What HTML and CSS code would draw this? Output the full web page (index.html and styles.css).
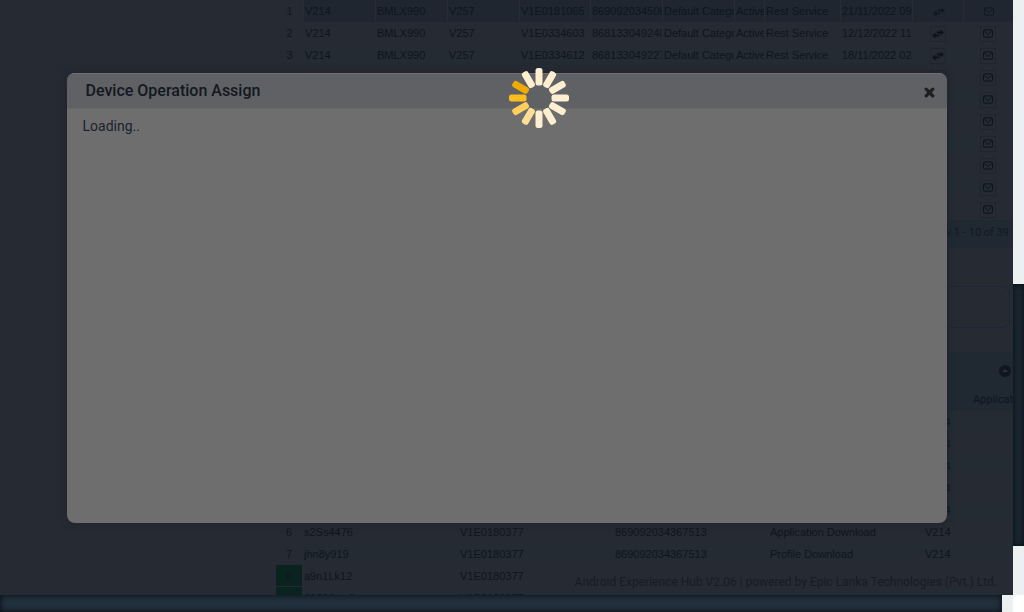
FILE: index.html
```
<!DOCTYPE html>
<html lang="en">
<head>
<meta charset="utf-8">
<title>Device Operation Assign</title>
<link rel="stylesheet" href="styles.css">
</head>
<body>
<svg class="sprite" aria-hidden="true">
  <symbol id="swap" viewBox="0 0 12 10"><path d="M0 6.500 3.500 3.500v2h3.700v2H3.500v2zM12 3.500 8.500.5v2H4.800v2h3.700v2z" fill="currentColor"/></symbol>
  <symbol id="mail" viewBox="0 0 10 9"><rect x=".5" y=".9" width="9" height="7.2" rx="1.2" fill="none" stroke="currentColor"/><path d="M1.3 2.3 5 5.5l3.7-3.2" fill="none" stroke="currentColor"/></symbol>
</svg>
<main class="page">
  <div class="content">
    <table class="grid devices">
      <colgroup><col class="c27"><col class="c72"><col class="c72"><col class="c72"><col class="c71"><col class="c72"><col class="c72"><col class="c30"><col class="c76"><col class="c72"><col class="c51"><col class="c50"></colgroup>
      <tbody id="devices"></tbody>
    </table>
    <div class="pager">View 1 - 10 of 39</div>
    <div class="panel"></div>
    <div class="caption"><button class="collapse" aria-label="Collapse"><svg viewBox="0 0 12 12"><circle cx="6" cy="6" r="6"/><path d="M3 7 6 4l3 3z"/></svg></button></div>
    <table class="grid history">
      <colgroup><col class="c26"><col class="c156"><col class="c155"><col class="c155"><col class="c155"><col class="c155"></colgroup>
      <thead><tr><th></th><th>Task ID</th><th>Serial No</th><th>IMEI</th><th>Operation</th><th>Application</th></tr></thead>
      <tbody id="history"></tbody>
    </table>
  </div>
  <footer class="credit">Android Experience Hub V2.06 | powered by Epic Lanka Technologies (Pvt.) Ltd.</footer>
  <div class="overlay">
    <section class="dialog" role="dialog" aria-labelledby="dialog-title">
      <header class="dialog-head">
        <h1 id="dialog-title">Device Operation Assign</h1>
        <button class="close" aria-label="Close"><svg viewBox="0 0 10 10"><path d="M2 2l6 6M8 2 2 8"/></svg></button>
      </header>
      <p class="dialog-body">Loading..</p>
    </section>
  </div>
  <svg class="spinner" viewBox="-30 -30 60 60" role="img" aria-label="Loading">
    <defs><rect id="bar" x="-3.5" y="-30" width="7" height="17.5" rx="2.5"/></defs>
    <g fill="#ffefd0">
      <use href="#bar"/><use href="#bar" transform="rotate(30)"/><use href="#bar" transform="rotate(60)"/><use href="#bar" transform="rotate(90)"/><use href="#bar" transform="rotate(120)"/><use href="#bar" transform="rotate(150)"/><use href="#bar" transform="rotate(180)"/><use href="#bar" transform="rotate(330)"/>
    </g>
    <use href="#bar" transform="rotate(210)" fill="#ffdf98"/>
    <use href="#bar" transform="rotate(240)" fill="#ffce5c"/>
    <use href="#bar" transform="rotate(270)" fill="#ffbd1d"/>
    <use href="#bar" transform="rotate(300)" fill="#f0ab00"/>
  </svg>
</main>
<div class="track track-y"><div class="thumb"></div></div>
<div class="track track-x"><div class="thumb"></div></div>
<div class="corner"></div>
<script src="app.js"></script>
</body>
</html>
```

FILE: styles.css
```
* { box-sizing: border-box; }
body {
  margin: 0;
  height: 100vh;
  display: grid;
  grid-template-columns: minmax(0, 1fr) 11px;
  grid-template-rows: minmax(0, 1fr) 17px;
  overflow: hidden;
  font-family: Roboto, sans-serif;
  background: #fff;
}
button { padding: 0; border: 0; background: none; }
button svg { display: block; }
.sprite { position: absolute; width: 0; height: 0; }
.page {
  position: relative;
  overflow: hidden;
  background: #262a33;
  color: #0e151f;
}
.content { padding-left: 276px; }

.grid {
  table-layout: fixed;
  border-collapse: separate;
  border-spacing: 0;
  font: 11px/22px "Liberation Sans", sans-serif;
}
.devices { width: 737px; }
.history { width: 802px; }
.c26 { width: 26px; }
.c27 { width: 27px; }
.c30 { width: 30px; }
.c50 { width: 50px; }
.c51 { width: 51px; }
.c71 { width: 71px; }
.c72 { width: 72px; }
.c76 { width: 76px; }
.c155 { width: 155px; }
.c156 { width: 156px; }
.grid tr { height: 22px; }
.grid td {
  height: 22px;
  padding: 0 0 0 2px;
  overflow: hidden;
  white-space: nowrap;
  vertical-align: middle;
}
.grid td:first-child { padding: 0; text-align: center; color: #10161f; }
.grid tbody tr:nth-child(odd) td:not(:first-child) { background: #242b33; }
.grid tbody tr.selected td:not(:first-child) {
  background: #1f2630;
  border-left: 1px solid #272c35;
  padding-left: 1px;
}
.grid .action { padding: 0; text-align: center; }
.tool {
  display: block;
  width: 16px;
  height: 16px;
  margin: 1px auto 0;
  border: 1px solid #1f242d;
  color: #0d131b;
}
.selected .tool { border-color: transparent; color: #111820; }
.tool svg { margin: 0 auto; }
.swap svg { width: 12px; height: 10px; }
.mail svg { width: 10px; height: 9px; }
.grid td.done {
  background: #0a231e;
  box-shadow: inset 0 -1px #262a33;
}
.grid th {
  height: 23px;
  padding: 0;
  background: #202832;
  font: 11px/23px Roboto, sans-serif;
}

.pager {
  height: 28px;
  padding: 0 4px;
  background: #202832;
  color: #121922;
  font-size: 11px;
  line-height: 25px;
  text-align: right;
}
.panel {
  height: 42px;
  margin: 38px 3px 24px 0;
  border: 1px solid #1f2534;
  border-radius: 8px;
}
.caption {
  display: flex;
  justify-content: flex-end;
  align-items: center;
  height: 36px;
  padding: 2px 2px 0 0;
  background: #202832;
}
.collapse svg { width: 12px; height: 12px; fill: #101720; }
.collapse path { fill: #2b323b; }

.credit {
  position: absolute;
  right: 16px;
  bottom: 5px;
  font-size: 12px;
  line-height: 16px;
  color: #161c25;
}

.overlay {
  position: absolute;
  inset: 0;
  display: grid;
  place-items: center;
}
.dialog {
  width: 87%;
  max-width: 880px;
  height: 450px;
  overflow: hidden;
  border-radius: 8px;
  background: #6e6e6e;
  box-shadow: 0 0 8px #20232d;
}
.dialog-head {
  display: flex;
  align-items: center;
  justify-content: space-between;
  height: 36px;
  padding: 0 12px 0 19px;
  background: #5f6164;
  border-top: 1px solid #707070;
  border-bottom: 1px solid #686868;
}
.dialog-head h1 {
  margin: 0;
  font-size: 16px;
  font-weight: 500;
  line-height: 20px;
  color: #131820;
}
.close { padding-top: 4px; }
.close svg { width: 11px; height: 11px; stroke: #1e1e1e; stroke-width: 3; stroke-linecap: round; }
.dialog-body {
  margin: 0;
  padding: 7px 16px;
  font-size: 14px;
  line-height: 20px;
  color: #1a222d;
}
.spinner {
  position: absolute;
  left: 509px;
  top: 68px;
  width: 60px;
  height: 60px;
}

.track { display: flex; background: #ecf0f1; }
.track-y { padding: 284px 0 49px; }
.track-x { padding-right: 11px; }
.thumb { flex: 1; }
.track-y .thumb { background: #1b2732; box-shadow: inset 0 0 6px #060a0e; }
.track-x .thumb { background: #22303e; box-shadow: inset 0 0 6px #060a0e; }
```

FILE: app.js
```
const devices = [
  ['V214', 'BMLX990', 'V257', 'V1E0181065', '869092034508', 'Default Category', 'Active', 'Rest Service', '21/11/2022 09'],
  ['V214', 'BMLX990', 'V257', 'V1E0334603', '868133049240', 'Default Category', 'Active', 'Rest Service', '12/12/2022 11'],
  ['V214', 'BMLX990', 'V257', 'V1E0334612', '868133049227', 'Default Category', 'Active', 'Rest Service', '18/11/2022 02']
];
const tasks = [
  [], [], [], [], [],
  ['s2Ss4476', 'V1E0180377', '869092034367513', 'Application Download', 'V214'],
  ['jhn8y919', 'V1E0180377', '869092034367513', 'Profile Download', 'V214'],
  ['a9n1Lk12', 'V1E0180377', '', '', ''],
  ['89686Lw8', 'V1E0180377', '', '', '']
];
const cell = text => `<td>${text || ''}</td>`;
const tool = (name, label) =>
  `<td class="action"><button class="tool ${name}" aria-label="${label}"><svg><use href="#${name}"/></svg></button></td>`;

let rows = '';
for (let i = 0; i < 10; i++) {
  const data = devices[i] || Array(9).fill('');
  rows += `<tr class="${i === 0 ? 'selected' : ''}">${cell(String(i + 1))}${data.map(cell).join('')}${tool('swap', 'Assign')}${tool('mail', 'Message')}</tr>`;
}
document.getElementById('devices').innerHTML = rows;

document.getElementById('history').innerHTML = tasks.map((data, i) => {
  const values = data.length ? data : ['', '', '', '', 'V214'];
  return `<tr><td class="${i > 6 ? 'done' : ''}">${i + 1}</td>${values.map(cell).join('')}</tr>`;
}).join('');
```
